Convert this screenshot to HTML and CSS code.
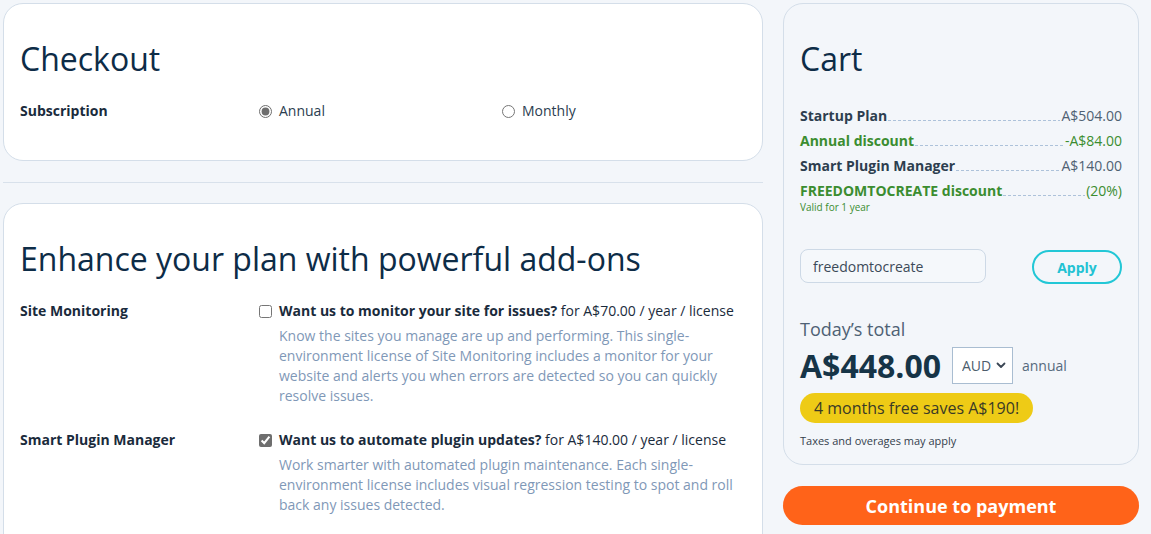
FILE: index.html
```html
<!DOCTYPE html>
<html lang="en">
<head>
<meta charset="utf-8">
<title>Checkout</title>
<link rel="stylesheet" href="styles.css">
</head>
<body>
<div class="page">
  <div class="main">
    <section class="card">
      <h1 class="title">Checkout</h1>
      <div class="sub-row">
        <div class="row-label">Subscription</div>
        <label class="choice"><input type="radio" name="sub" checked> <span>Annual</span></label>
        <label class="choice"><input type="radio" name="sub"> <span>Monthly</span></label>
      </div>
    </section>
    <hr class="divider">
    <section class="card">
      <h1 class="title">Enhance your plan with powerful add-ons</h1>
      <div class="addon">
        <div class="row-label">Site Monitoring</div>
        <div class="addon-body">
          <input type="checkbox" class="addon-check">
          <div class="addon-text">
            <div class="addon-title"><strong>Want us to monitor your site for issues?</strong> for A$70.00 / year / license</div>
            <p class="addon-desc">Know the sites you manage are up and performing. This single-environment license of Site Monitoring includes a monitor for your website and alerts you when errors are detected so you can quickly resolve issues.</p>
          </div>
        </div>
      </div>
      <div class="addon">
        <div class="row-label">Smart Plugin Manager</div>
        <div class="addon-body">
          <input type="checkbox" class="addon-check" checked>
          <div class="addon-text">
            <div class="addon-title"><strong>Want us to automate plugin updates?</strong> for A$140.00 / year / license</div>
            <p class="addon-desc">Work smarter with automated plugin maintenance. Each single-environment license includes visual regression testing to spot and roll back any issues detected.</p>
          </div>
        </div>
      </div>
    </section>
  </div>
  <aside class="side">
    <section class="cart">
      <h1 class="title">Cart</h1>
      <div class="lines">
        <div class="line"><span class="l-name">Startup Plan</span><span class="leader"></span><span class="l-price">A$504.00</span></div>
        <div class="line green"><span class="l-name">Annual discount</span><span class="leader"></span><span class="l-price">-A$84.00</span></div>
        <div class="line"><span class="l-name">Smart Plugin Manager</span><span class="leader"></span><span class="l-price">A$140.00</span></div>
        <div class="line green"><span class="l-name">FREEDOMTOCREATE discount</span><span class="leader"></span><span class="l-price">(20%)</span></div>
        <div class="valid">Valid for 1 year</div>
      </div>
      <div class="coupon">
        <input class="coupon-input" type="text" value="freedomtocreate">
        <button class="apply" type="button">Apply</button>
      </div>
      <div class="total-label">Today’s total</div>
      <div class="total-row">
        <span class="amount">A$448.00</span>
        <span class="currency">
          <select class="currency-select"><option>AUD</option></select>
          <svg class="chev" width="10" height="7" viewBox="0 0 10 7"><path d="M1.5 1.5 L5 5 L8.5 1.5" fill="none" stroke="#3a4654" stroke-width="1.8" stroke-linecap="round" stroke-linejoin="round"/></svg>
        </span>
        <span class="period">annual</span>
      </div>
      <div class="promo">4 months free saves A$190!</div>
      <div class="taxes">Taxes and overages may apply</div>
    </section>
    <button class="pay" type="button">Continue to payment</button>
  </aside>
</div>
</body>
</html>
```

FILE: styles.css
```css
* { box-sizing: border-box; }

body {
  margin: 0;
  background: #f3f6fa;
  font-family: "Open Sans", "Noto Sans", sans-serif;
  color: #1a2b3c;
  font-size: 14px;
}

.page {
  display: flex;
  align-items: flex-start;
  gap: 20px;
  padding: 3px;
}

.main {
  width: 760px;
  display: flex;
  flex-direction: column;
}

.card {
  background: #ffffff;
  border: 1px solid #d4dee9;
  border-radius: 20px;
  padding: 35px 16px 39px;
}

.title {
  margin: 0 0 22px;
  font-size: 32px;
  line-height: 40px;
  font-weight: 400;
  color: #0d2c47;
}

.divider {
  border: 0;
  height: 1px;
  background: #d8e1eb;
  margin: 21px 0 20px;
}

.sub-row {
  display: grid;
  grid-template-columns: 239px 243px 1fr;
  line-height: 20px;
}

.row-label {
  font-weight: 700;
  color: #1a2b3c;
  line-height: 20px;
}

.choice {
  display: flex;
  align-items: center;
  gap: 7px;
  color: #2b3d50;
}

input[type="radio"],
input[type="checkbox"] {
  margin: 0;
  width: 13px;
  height: 13px;
  accent-color: #6e6e6e;
  flex: none;
}

.addon {
  display: grid;
  grid-template-columns: 239px 1fr;
  margin-bottom: 24px;
}

.addon-body {
  display: flex;
  gap: 7px;
  align-items: flex-start;
}

.addon-check {
  margin-top: 4px !important;
}

.addon-text {
  width: 468px;
}

.addon-title {
  line-height: 20px;
  color: #1a2b3c;
}

.addon-title strong {
  font-weight: 700;
}

.addon-desc {
  margin: 5px 0 0;
  line-height: 20px;
  color: #7f98b7;
}

/* Cart */
.side {
  width: 356px;
  display: flex;
  flex-direction: column;
}

.cart {
  border: 1px solid #d4dee9;
  border-radius: 20px;
  padding: 35px 16px 15px;
  background: #f3f6fa;
}

.lines {
  margin-top: 27px;
}

.line {
  display: flex;
  align-items: flex-end;
  line-height: 20px;
  margin-bottom: 5px;
  color: #2d3e4f;
}

.l-name {
  font-weight: 700;
}

.leader {
  flex: 1;
  height: 1px;
  margin: 0 1px 5px;
  background-image: repeating-linear-gradient(to right, #adc2da 0 3px, transparent 3px 5px);
}

.l-price {
  color: #4f6172;
}

.line.green,
.line.green .l-price {
  color: #3b8d30;
}

.valid {
  margin-top: -5px;
  font-size: 10px;
  line-height: 12px;
  color: #3b8d30;
}

.coupon {
  margin-top: 36px;
  display: flex;
  justify-content: space-between;
  align-items: flex-start;
}

.coupon-input {
  width: 186px;
  height: 34px;
  border: 1px solid #cdd9e6;
  border-radius: 8px;
  background: #f5f8fb;
  padding: 0 12px;
  font-family: inherit;
  font-size: 14px;
  color: #3c4a58;
}

.apply {
  width: 90px;
  height: 34px;
  margin-top: 1px;
  border: 2px solid #22c7d6;
  border-radius: 18px;
  background: transparent;
  font-family: inherit;
  font-size: 14px;
  font-weight: 700;
  color: #22c2d3;
}

.total-label {
  margin-top: 33px;
  font-size: 18px;
  line-height: 24px;
  color: #4e6174;
}

.total-row {
  margin-top: 6px;
  display: flex;
  align-items: center;
  height: 37px;
}

.amount {
  font-size: 32px;
  font-weight: 700;
  line-height: 37px;
  color: #163447;
}

.currency {
  position: relative;
  margin-left: 11px;
  width: 61px;
  height: 37px;
}

.currency-select {
  appearance: none;
  -webkit-appearance: none;
  width: 61px;
  height: 37px;
  border: 1px solid #a9bdd1;
  border-radius: 0;
  background: #ffffff;
  padding: 0 0 0 9px;
  font-family: inherit;
  font-size: 14px;
  color: #4c5c6c;
}

.chev {
  position: absolute;
  right: 7px;
  top: 15px;
  pointer-events: none;
}

.period {
  margin-left: 9px;
  color: #566a7d;
}

.promo {
  margin-top: 9px;
  display: inline-block;
  align-self: flex-start;
  width: 233px;
  height: 30px;
  line-height: 30px;
  padding: 0 14px;
  border-radius: 15px;
  background: #eecb16;
  font-size: 16px;
  color: #3a3a26;
  white-space: nowrap;
}

.taxes {
  margin-top: 10px;
  font-size: 11px;
  line-height: 16px;
  color: #33404c;
}

.pay {
  margin-top: 21px;
  width: 356px;
  height: 39px;
  border: 0;
  border-radius: 20px;
  background: #ff6319;
  color: #ffffff;
  font-family: inherit;
  font-size: 18px;
  font-weight: 700;
}
```
